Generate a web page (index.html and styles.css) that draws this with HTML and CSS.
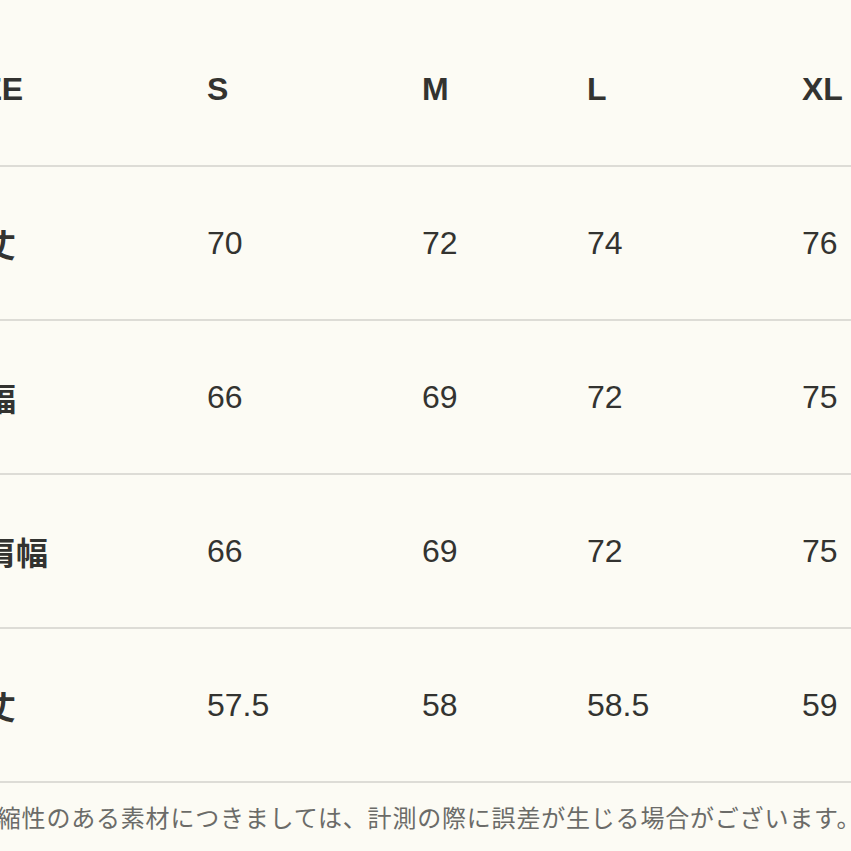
FILE: index.html
```html
<!DOCTYPE html>
<html lang="ja">
<head>
<meta charset="utf-8">
<link rel="stylesheet" href="styles.css">
</head>
<body>
<div class="sheet">
  <div class="table">
    <div class="row head">
      <div class="cell label">SIZE</div>
      <div class="cell">S</div>
      <div class="cell">M</div>
      <div class="cell">L</div>
      <div class="cell">XL</div>
    </div>
    <div class="row">
      <div class="cell label">着丈</div>
      <div class="cell">70</div>
      <div class="cell">72</div>
      <div class="cell">74</div>
      <div class="cell">76</div>
    </div>
    <div class="row">
      <div class="cell label">身幅</div>
      <div class="cell">66</div>
      <div class="cell">69</div>
      <div class="cell">72</div>
      <div class="cell">75</div>
    </div>
    <div class="row">
      <div class="cell label">背肩幅</div>
      <div class="cell">66</div>
      <div class="cell">69</div>
      <div class="cell">72</div>
      <div class="cell">75</div>
    </div>
    <div class="row">
      <div class="cell label">袖丈</div>
      <div class="cell">57.5</div>
      <div class="cell">58</div>
      <div class="cell">58.5</div>
      <div class="cell">59</div>
    </div>
  </div>
  <p class="note">伸縮性のある素材につきましては、計測の際に誤差が生じる場合がございます。</p>
</div>
</body>
</html>
```

FILE: styles.css
```css
html, body {
  margin: 0;
  padding: 0;
  background: #fcfbf4;
  overflow: hidden;
}
.sheet {
  margin-left: -48px;
  padding-top: 13px;
  width: 960px;
}
.table {
  display: flex;
  flex-direction: column;
}
.row {
  display: grid;
  grid-template-columns: 255px 215px 165px 215px 110px;
  height: 152px;
  align-items: center;
  border-bottom: 2px solid #dddcd6;
  font-family: "Liberation Sans", Arial, sans-serif;
  font-size: 32px;
  color: #333330;
}
.cell {
  white-space: nowrap;
}
.head .cell {
  font-weight: bold;
}
.label {
  font-family: "Liberation Sans", "Noto Sans CJK JP", sans-serif;
  font-weight: bold;
}
.note {
  margin: 18px 0 0 20px;
  font-family: "Noto Sans CJK JP", sans-serif;
  font-size: 24px;
  line-height: 32px;
  letter-spacing: 0.8px;
  color: #6b6b68;
  white-space: nowrap;
}
```
